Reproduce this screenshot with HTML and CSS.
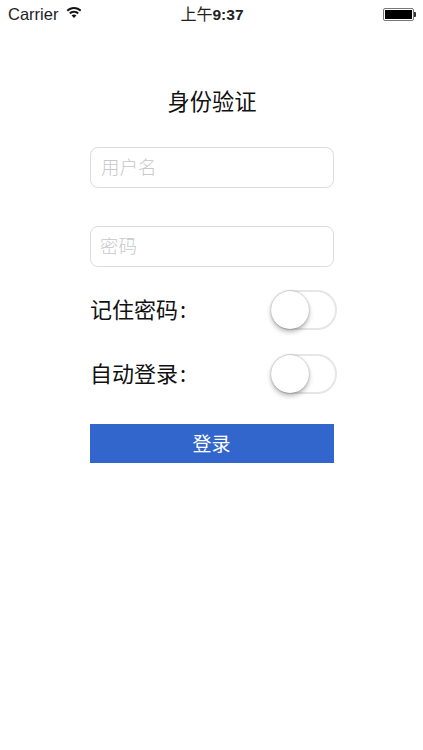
FILE: index.html
```html
<!DOCTYPE html>
<html lang="zh-CN">
<head>
<meta charset="utf-8">
<title>身份验证</title>
<link rel="stylesheet" href="styles.css">
</head>
<body>
<div class="status">
  <div class="status-left">
    <span class="carrier">Carrier</span>
    <svg class="wifi" width="16" height="13" viewBox="0 0 16 12"><path d="M8 .6C5.200.6 2.600 1.700.6 3.600l1.400 1.500C3.600 3.500 5.700 2.600 8 2.600s4.400.9 6 2.500l1.400-1.500C13.400 1.700 10.800.6 8 .6z"/><path d="M8 4.300c-1.800 0-3.500.7-4.800 1.900l1.400 1.500C5.500 6.900 6.700 6.300 8 6.300s2.500.6 3.400 1.400l1.400-1.500C11.500 5 9.800 4.300 8 4.300z"/><path d="M8 8c-.9 0-1.800.3-2.400 1L8 11.500 10.400 9c-.6-.7-1.500-1-2.400-1z"/></svg>
  </div>
  <div class="time"><span class="time-cjk">上午</span>9:37</div>
  <div class="status-right">
    <div class="battery"><div class="battery-fill"></div></div>
    <div class="battery-tip"></div>
  </div>
</div>
<main class="form">
  <h1 class="title">身份验证</h1>
  <div class="field">用户名</div>
  <div class="field field-second">密码</div>
  <div class="row row-first">
    <span class="label">记住密码<span class="colon">:</span></span>
    <div class="switch"><div class="thumb"></div></div>
  </div>
  <div class="row row-second">
    <span class="label">自动登录<span class="colon">:</span></span>
    <div class="switch"><div class="thumb"></div></div>
  </div>
  <button class="login">登录</button>
</main>
</body>
</html>
```
FILE: styles.css
```css
* { box-sizing: border-box; }
html, body { margin: 0; padding: 0; background: #fff; }
body {
  width: 423px;
  height: 750px;
  overflow: hidden;
  font-family: "Liberation Sans", "Noto Sans CJK SC", sans-serif;
  color: #111;
}
.status {
  height: 28px;
  display: grid;
  grid-template-columns: 1fr auto 1fr;
  align-items: center;
  padding: 0 5px 0 8px;
}
.status-left { display: flex; align-items: center; gap: 8px; }
.carrier { font-size: 16.500px; color: #222; }
.wifi { fill: #111; margin-bottom: 3px; }
.time {
  font-size: 15.500px;
  font-weight: 700;
  color: #222;
  padding: 0 2px 2px 0;
}
.time-cjk { font-size: 16px; font-weight: 400; }
.status-right { display: flex; justify-content: flex-end; align-items: center; padding-right: 2px; }
.battery {
  width: 31px;
  height: 13px;
  border: 1px solid #777;
  border-radius: 2px;
  padding: 1px;
}
.battery-fill { width: 100%; height: 100%; background: #000; }
.battery-tip { width: 2px; height: 5px; background: #333; border-radius: 0 1px 1px 0; }
.form {
  margin-left: 90px;
  width: 244px;
  display: flex;
  flex-direction: column;
  padding-top: 58px;
}
.title {
  margin: 0;
  font-family: "Noto Sans CJK SC", sans-serif;
  font-size: 22.300px;
  font-weight: 400;
  line-height: 28px;
  text-align: center;
  color: #111;
  height: 31px;
}
.field {
  margin-top: 30px;
  height: 41px;
  border: 1px solid #dcdcdc;
  border-radius: 8px;
  padding-left: 10px;
  font-family: "Noto Sans CJK SC", sans-serif;
  font-size: 18.500px;
  font-weight: 300;
  line-height: 37px;
  color: #c8c8c8;
}
.field-second { margin-top: 38px; padding-left: 9px; }
.row {
  display: flex;
  align-items: center;
  justify-content: space-between;
  width: 247px;
  height: 40px;
}
.row-first { margin-top: 23px; }
.row-second { margin-top: 24px; }
.label {
  font-family: "Noto Sans CJK SC", sans-serif;
  font-size: 22px;
  font-weight: 400;
  color: #111;
  padding-bottom: 4px;
}
.colon { margin-left: 2px; }
.switch {
  position: relative;
  width: 66px;
  height: 40px;
  border: 2px solid #e6e6e6;
  border-radius: 20px;
  background: #fff;
}
.thumb {
  position: absolute;
  left: -2px;
  top: -1px;
  width: 38px;
  height: 38px;
  border-radius: 50%;
  background: #fff;
  box-shadow: 0 3px 5px rgba(0, 0, 0, 0.28), 0 0 2px rgba(0, 0, 0, 0.3);
}
.login {
  margin-top: 30px;
  height: 39px;
  border: 0;
  padding: 0 1px 3px 0;
  background: #3366cc;
  color: #fff;
  font-family: "Noto Sans CJK SC", sans-serif;
  font-size: 19px;
  font-weight: 400;
}
```
